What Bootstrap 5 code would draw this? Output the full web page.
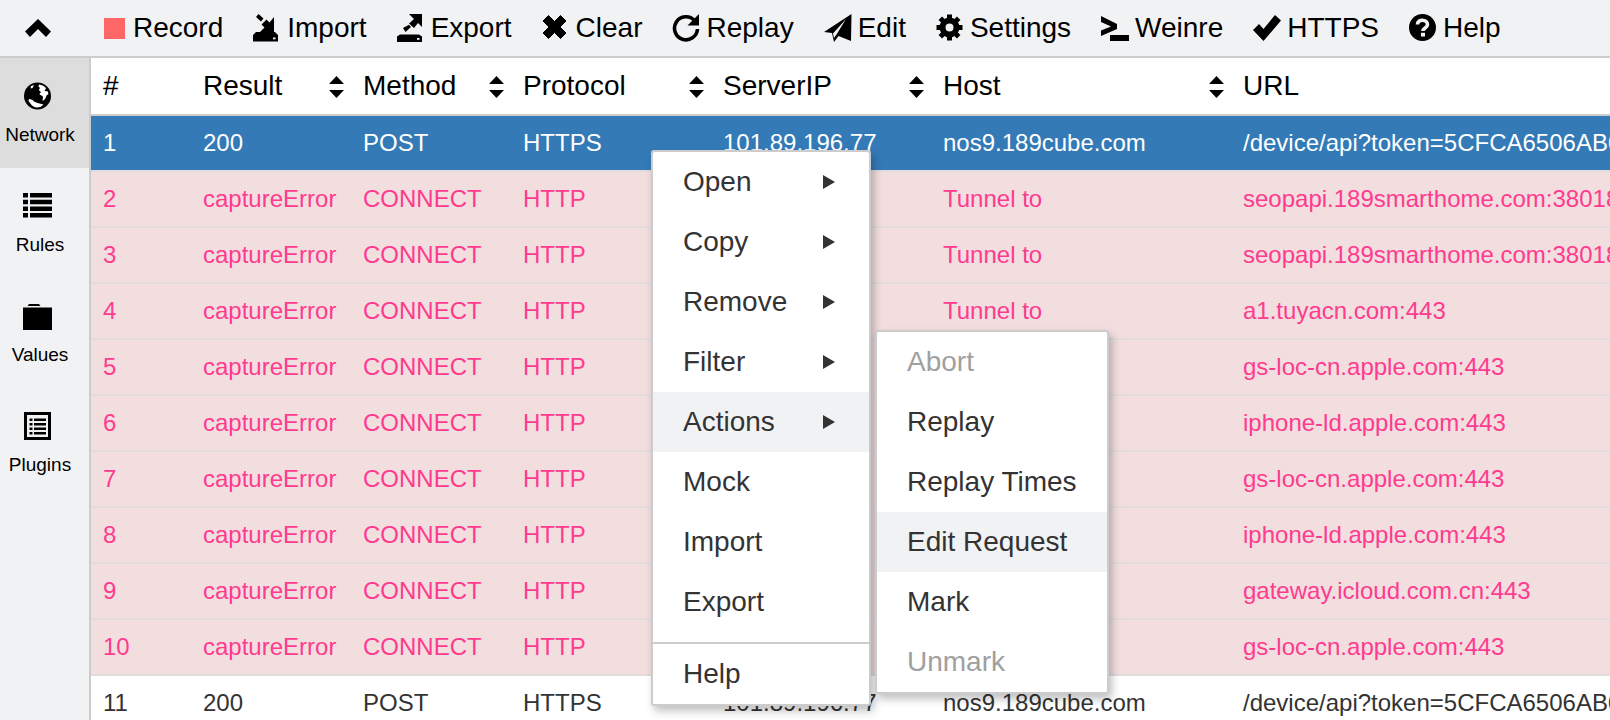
<!DOCTYPE html>
<html>
<head>
  <link href="https://cdn.jsdelivr.net/npm/bootstrap@5.3.3/dist/css/bootstrap.min.css" rel="stylesheet">
  <title>Network</title>
  <style>
    body {
      font-family: "Liberation Sans", Arial, sans-serif;
      color: #000;
      background: #fff;
    }
    /* Top toolbar */
    .top-bar {
      height: 58px;
      background: #f1f2f4;
      border-bottom: 2px solid #ccc;
      font-size: 28px;
      flex-shrink: 0;
    }
    .collapse-btn { width: 89px; padding-left: 25px; }
    .tool-btn {
      padding: 0 15px;
      color: #000;
      text-decoration: none;
      line-height: 56px;
    }
    .tool-btn svg { width: 28px; height: 28px; margin-right: 6px; flex-shrink: 0; }
    .tool-btn svg.rec-ico { width: 21px; height: 21px; margin-right: 8px; }

    /* Left tabs */
    .side-tabs {
      width: 91px;
      background: #f1f2f4;
      border-right: 2px solid #ccc;
      flex-shrink: 0;
    }
    .side-tab {
      height: 110px;
      color: #000;
      font-size: 19px;
      padding: 24px 9px 0 0;
      line-height: 1;
    }
    .side-tab:hover { color: #000; }
    .side-tab.is-active { background: #ddd; }
    .side-tab svg { width: 29px; height: 28px; margin-right: 5px; margin-bottom: 15px; }

    /* Network table */
    .net-table {
      table-layout: fixed;
      width: 100%;
      border-collapse: separate;
      border-spacing: 0;
      margin: 0;
    }
    .net-table th, .net-table td {
      padding: 0 12px !important;
      white-space: nowrap;
      overflow: hidden;
      box-shadow: none !important;
    }
    .net-table th {
      height: 58px;
      font-size: 28px;
      font-weight: 400;
      color: #000;
      vertical-align: middle;
      border-bottom: 2px solid #ccc;
    }
    .net-table td {
      height: 56px;
      font-size: 24px;
      border-bottom: 2px solid #e2dcdc;
      color: #333;
    }
    .net-table tr.row-selected td { background: #337ab7; color: #fff; }
    .net-table tr.row-error td { background: #f2dede; color: #ff3a8f; }
    .sort-ico { width: 15px; height: 22px; flex-shrink: 0; margin-top: 1px; margin-right: -5px; }

    /* Context menus */
    .ctx-menu {
      min-width: 0;
      padding: 0;
      margin: 0;
      border: 2px solid #ccc;
      border-radius: 3px;
      box-shadow: 3px 5px 9px rgba(0, 0, 0, .25);
      font-size: 28px;
    }
    .ctx-main { top: 150px; left: 651px; width: 220px; }
    .ctx-sub { top: 330px; left: 875px; width: 234px; }
    .ctx-menu .dropdown-item {
      height: 60px;
      padding: 0 29px 0 30px;
      color: #333;
      font-size: 28px;
      line-height: 60px;
    }
    .ctx-menu .dropdown-item.is-hover { background: #f1f2f4; }
    .ctx-menu .dropdown-item.disabled { color: #a0a0a0; }
    .ctx-menu .dropdown-divider { margin: 10px 0 0; border-top: 2px solid #ccc; opacity: 1; }
    .sub-arrow { width: 12px; height: 14px; margin-right: 5px; }
  </style>
</head>
<body class="d-flex flex-column vh-100 overflow-hidden">

  <!-- Toolbar -->
  <div class="top-bar d-flex align-items-center">
    <div class="collapse-btn d-flex">
      <svg width="26" height="18" viewBox="0 0 26 18"><path d="M13 0 26 12.500 21 18l-8-8-8 8L0 12.500z"/></svg>
    </div>
    <a class="tool-btn d-flex align-items-center" href="#">
      <svg class="rec-ico" viewBox="0 0 21 21"><rect width="21" height="21" fill="#ff6666"/></svg>Record
    </a>
    <a class="tool-btn d-flex align-items-center" href="#">
      <svg viewBox="0 0 28 28"><path d="M5.500 0 10.500 4.500 8 7.500 3 3zM21 3V18H7l4.500-4.500-3-3 5-5 3 3zM3 18H22L25 21V27.500H0V21z"/><rect x="20" y="23.500" width="2.500" height="1.800" fill="#f1f2f4"/></svg>Import
    </a>
    <a class="tool-btn d-flex align-items-center" href="#">
      <svg viewBox="0 0 28 28"><path d="M12 0H25V13L21 9 17 14 12 9.500 17 5zM6 14 12 10.700 14 13 8.500 18zM3 20.500H22L25 22.500V28H0V22.500z"/><rect x="20" y="24" width="2.500" height="1.800" fill="#f1f2f4"/></svg>Export
    </a>
    <a class="tool-btn d-flex align-items-center" href="#">
      <svg viewBox="0 0 28 28"><path d="M6.500 1.500 12.500 7.500 18.500 1.500 24 7 18 13 24 19 18.500 24.500 12.500 18.500 6.500 24.500 1 19 7 13 1 7z" stroke="#000" stroke-linejoin="round"/></svg>Clear
    </a>
    <a class="tool-btn d-flex align-items-center" href="#">
      <svg viewBox="0 0 28 28"><path d="M22.500 6.500A11.500 11.500 0 1 0 25.500 15" fill="none" stroke="#000" stroke-width="3.600"/><path d="M27 0V11.500H15.500z"/></svg>Replay
    </a>
    <a class="tool-btn d-flex align-items-center" href="#">
      <svg viewBox="0 0 28 28"><path fill-rule="evenodd" d="M27.500 0 0 18l8 1 2 9 4.500-6 12.500 5zM22 5 9 19.500l1 4.500 2.500-3.500z"/></svg>Edit
    </a>
    <a class="tool-btn d-flex align-items-center" href="#">
      <svg viewBox="0 0 28 28">
        <circle cx="13.500" cy="13.500" r="7" fill="none" stroke="#000" stroke-width="6"/>
        <g><rect x="11" y="0.500" width="5" height="6"/><rect x="11" y="0.500" width="5" height="6" transform="rotate(45 13.500 13.500)"/><rect x="11" y="0.500" width="5" height="6" transform="rotate(90 13.500 13.500)"/><rect x="11" y="0.500" width="5" height="6" transform="rotate(135 13.500 13.500)"/><rect x="11" y="0.500" width="5" height="6" transform="rotate(180 13.500 13.500)"/><rect x="11" y="0.500" width="5" height="6" transform="rotate(225 13.500 13.500)"/><rect x="11" y="0.500" width="5" height="6" transform="rotate(270 13.500 13.500)"/><rect x="11" y="0.500" width="5" height="6" transform="rotate(315 13.500 13.500)"/></g>
      </svg>Settings
    </a>
    <a class="tool-btn d-flex align-items-center" href="#">
      <svg viewBox="0 0 28 28"><path d="M0 2 16 10V15L0 22V16.500L10 12.500 0 8zM9 21H28V27H9z"/></svg>Weinre
    </a>
    <a class="tool-btn d-flex align-items-center" href="#">
      <svg viewBox="0 0 28 28"><path d="M0 16 6 10 10.500 15 22 1 28 6.500 10.500 27z"/></svg>HTTPS
    </a>
    <a class="tool-btn d-flex align-items-center" href="#">
      <svg viewBox="0 0 28 28"><circle cx="13.500" cy="13.500" r="13.500"/><path d="M8.500 10.500C8.500 4.500 18.500 5 18.500 10.500 18.500 14 14 14 14 17" fill="none" stroke="#f1f2f4" stroke-width="3.600"/><rect x="12" y="18.800" width="4" height="3.700" fill="#f1f2f4"/></svg>Help
    </a>
  </div>

  <div class="d-flex flex-grow-1 overflow-hidden">
    <!-- Left tabs -->
    <nav class="side-tabs nav flex-column flex-nowrap">
      <a class="side-tab nav-link is-active d-flex flex-column align-items-center" href="#">
        <svg viewBox="0 0 29 28">
          <circle cx="14.500" cy="14" r="13.500"/>
          <path d="M16 2.500c3 .3 5 1.500 7 3.500-.5 1.500-1 2-1.500 2.500.5.800 2 1 3 .5l1 3-2 1.500c-.5 2-1 3-2.500 4.500l-1.500 1c0-2 1-3.500 0-5-1-.8-2.500-.8-3-2l1.500-2c-1-.5-2-1.500-2-2.500l1-1.500-1.500-1.500z M6 17c2 0 4 1 5 2.500l3.500 1.500 6 1.500c-1.500 2-4 3-6 3-3.500 0-6-2-7.500-4.500L5.500 19z M8 4c1-.5 2-.8 3-.8L9.500 6l-2 .5z" fill="#fff"/>
        </svg>
        Network
      </a>
      <a class="side-tab nav-link d-flex flex-column align-items-center" href="#">
        <svg viewBox="0 0 29 28">
          <path d="M0 1h5v4.500H0zM7 1h22v4.500H7zM0 7.700h5v4.500H0zM7 7.700h22v4.500H7zM0 14.400h5v4.500H0zM7 14.400h22v4.500H7zM0 21h5v4.500H0zM7 21h22v4.500H7z"/>
        </svg>
        Rules
      </a>
      <a class="side-tab nav-link d-flex flex-column align-items-center" href="#">
        <svg viewBox="0 0 29 28">
          <path d="M4.500 4 6 2H16L17.500 4zM0 5.500H29V28H0z"/>
        </svg>
        Values
      </a>
      <a class="side-tab nav-link d-flex flex-column align-items-center" href="#">
        <svg viewBox="0 0 29 28">
          <path fill-rule="evenodd" d="M1 0H28V28H1zM4 3V25H25V3z"/>
          <path d="M6.500 6.500h3v2.500h-3zM11 6.500H23v2.500H11zM6.500 11h3v2.500h-3zM11 11H23v2.500H11zM6.500 15.500h3v2.500h-3zM11 15.500H23v2.500H11zM6.500 20h3v2.500h-3zM11 20H23v2.500H11z"/>
        </svg>
        Plugins
      </a>
    </nav>

    <!-- Sessions -->
    <div class="flex-grow-1 overflow-hidden">
      <table class="table net-table align-middle">
        <colgroup>
          <col width="100"><col width="160"><col width="160"><col width="200"><col width="220"><col width="300"><col>
        </colgroup>
        <thead id="sessionHead"></thead>
        <tbody id="sessionBody"></tbody>
      </table>
    </div>
  </div>

  <!-- Context menu -->
  <ul class="dropdown-menu show ctx-menu ctx-main">
    <li><a class="dropdown-item d-flex justify-content-between align-items-center" href="#">Open<svg class="sub-arrow" viewBox="0 0 12 14"><path d="M0 0 12 7 0 14z" fill="#333"/></svg></a></li>
    <li><a class="dropdown-item d-flex justify-content-between align-items-center" href="#">Copy<svg class="sub-arrow" viewBox="0 0 12 14"><path d="M0 0 12 7 0 14z" fill="#333"/></svg></a></li>
    <li><a class="dropdown-item d-flex justify-content-between align-items-center" href="#">Remove<svg class="sub-arrow" viewBox="0 0 12 14"><path d="M0 0 12 7 0 14z" fill="#333"/></svg></a></li>
    <li><a class="dropdown-item d-flex justify-content-between align-items-center" href="#">Filter<svg class="sub-arrow" viewBox="0 0 12 14"><path d="M0 0 12 7 0 14z" fill="#333"/></svg></a></li>
    <li><a class="dropdown-item is-hover d-flex justify-content-between align-items-center" href="#">Actions<svg class="sub-arrow" viewBox="0 0 12 14"><path d="M0 0 12 7 0 14z" fill="#333"/></svg></a></li>
    <li><a class="dropdown-item" href="#">Mock</a></li>
    <li><a class="dropdown-item" href="#">Import</a></li>
    <li><a class="dropdown-item" href="#">Export</a></li>
    <li><hr class="dropdown-divider"></li>
    <li><a class="dropdown-item" href="#">Help</a></li>
  </ul>

  <ul class="dropdown-menu show ctx-menu ctx-sub">
    <li><a class="dropdown-item disabled" href="#">Abort</a></li>
    <li><a class="dropdown-item" href="#">Replay</a></li>
    <li><a class="dropdown-item" href="#">Replay Times</a></li>
    <li><a class="dropdown-item is-hover" href="#">Edit Request</a></li>
    <li><a class="dropdown-item" href="#">Mark</a></li>
    <li><a class="dropdown-item disabled" href="#">Unmark</a></li>
  </ul>

  <script>
    const sortIcon = '<svg class="sort-ico" viewBox="0 0 15 22"><path d="M7.500 0 15 8H0zM0 14H15L7.500 22z"/></svg>';

    // Header cells
    const columns = ['#', 'Result', 'Method', 'Protocol', 'ServerIP', 'Host', 'URL'];
    document.getElementById('sessionHead').innerHTML = '<tr>' + columns.map((name, i) => {
        const arrows = i > 0 && i < 6 ? sortIcon : '';
        return `<th><div class="d-flex justify-content-between align-items-center">${name}${arrows}</div></th>`;
    }).join('') + '</tr>';

    // Session rows
    const apiUrl = '/device/api?token=5CFCA6506AB0E4A7C2F19D83';
    const okRow = ['200', 'POST', 'HTTPS', '101.89.196.77', 'nos9.189cube.com', apiUrl];
    const urls = [
        'seopapi.189smarthome.com:38018',
        'seopapi.189smarthome.com:38018',
        'a1.tuyacn.com:443',
        'gs-loc-cn.apple.com:443',
        'iphone-ld.apple.com:443',
        'gs-loc-cn.apple.com:443',
        'iphone-ld.apple.com:443',
        'gateway.icloud.com.cn:443',
        'gs-loc-cn.apple.com:443'
    ];
    const rows = [{ cls: 'row-selected', cells: okRow }];
    urls.forEach(url => {
        rows.push({ cls: 'row-error', cells: ['captureError', 'CONNECT', 'HTTP', '', 'Tunnel to', url] });
    });
    rows.push({ cls: '', cells: okRow });

    document.getElementById('sessionBody').innerHTML = rows.map((row, i) =>
        `<tr class="${row.cls}"><td>${i + 1}</td>${row.cells.map(c => `<td>${c}</td>`).join('')}</tr>`
    ).join('');
  </script>
  <script src="https://cdn.jsdelivr.net/npm/bootstrap@5.3.3/dist/js/bootstrap.bundle.min.js"></script>
</body>
</html>
